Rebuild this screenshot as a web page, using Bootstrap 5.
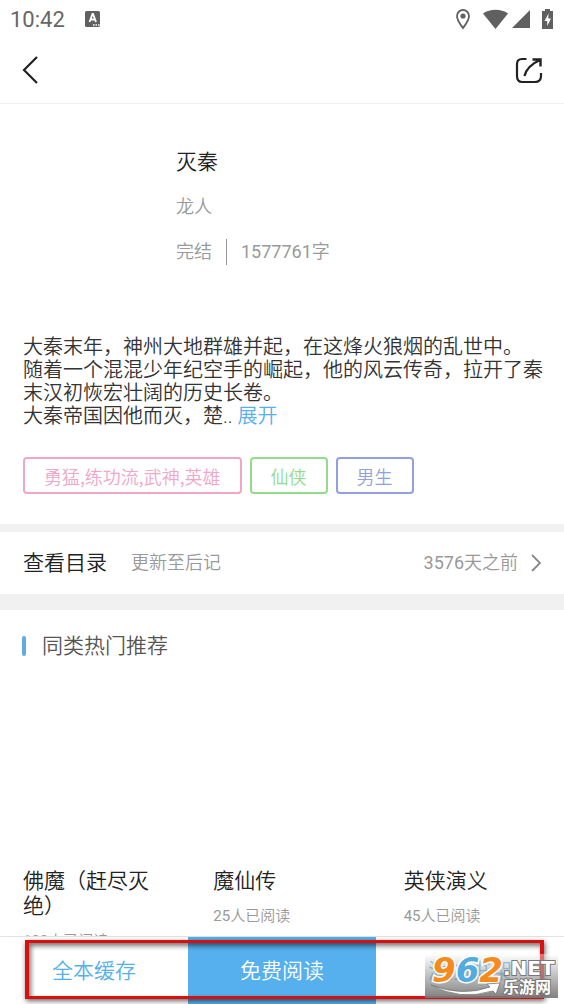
<!DOCTYPE html>
<html lang="zh-CN">
<head>
<meta charset="utf-8">
<meta name="viewport" content="width=device-width, initial-scale=1">
<title>灭秦</title>
<link rel="stylesheet" href="https://cdn.jsdelivr.net/npm/bootstrap@5.3.0/dist/css/bootstrap.min.css">
<style>
body{font-family:Roboto,"Noto Sans CJK SC",sans-serif;font-weight:350;color:#222;background:#fff}
a{text-decoration:none}
.status{height:38px;padding:0 11px 0 10px;color:#666;font-size:22px;font-weight:400}
.topbar{height:66px;padding:0 20px;border-bottom:1px solid #f1f1f1}
.plain{border:0;background:none;padding:0;line-height:1;color:#222}
.gap-before{margin-left:12px}
.t21{font-size:21px;line-height:26px;font-weight:350}
.t18{font-size:18px;line-height:24px;font-weight:350}
.t15{font-size:15px;line-height:20px}
.soft{color:#999}
.info{padding:45px 23px 0 176px;height:232px}
.author,.meta{margin-top:20px}
.rule{width:1px;height:26px;background:#999;margin:0 14px}
.intro{font-size:20px;line-height:23px;padding:0 20px 0 23px;color:#333}
.intro a{color:#55b0ed}
.tags{padding:29px 23px 30px}
.tagbtn{height:37px;border:2px solid currentColor;border-radius:4px;background:#fff;padding:0 19px;font-family:"Noto Sans CJK SC",sans-serif;line-height:30px}
.pink{color:#f0a6c8}.green{color:#92dc8c}.violet{color:#929fe2}
.band{background:#f1f1f1}
.catalog{height:62px;padding:0 20px 0 23px;color:#222}
.section-title{padding:23px 22px 0;gap:16px;color:#555}
.bar{width:4px;height:20px;border-radius:2px;background:#62abe4}
.books{display:grid;grid-template-columns:repeat(3,1fr);column-gap:53px;padding:0 23px}
.cover{height:210px}
.bookname{font-size:21px;line-height:25px;font-weight:350;color:#222;margin-bottom:12px}
.actions{height:68px;border-top:1px solid #e2e2e2;background:#fff}
.actions button{border:0;border-radius:0;background:#fff;color:#55b0ed}
.actions .read{background:#55b0ed;color:#fff}
.frame{position:absolute;inset:3px 20px 5px 25px;border:4px solid #d9100f;border-width:3px 4px;box-shadow:1px 2px 5px #0009,inset 2px 3px 5px #0008;pointer-events:none}
.stamp{position:absolute;right:6px;bottom:6px;width:133px;height:44px;background:linear-gradient(#ffffff66,#777777ee);pointer-events:none}
</style>
</head>
<body>
<div class="d-flex flex-column vh-100 overflow-hidden">
<header class="flex-shrink-0">
<div class="status d-flex align-items-center">
<span>10:42</span>
<svg class="ms-3" width="24" height="18" viewBox="0 0 24 18" role="img" aria-label="输入法"><rect x="4" y="1" width="15" height="16" rx="1.500" fill="#606060"/><path d="m8.500 12 3-8h.500l3 8M9.500 9.500h4.600" fill="none" stroke="#fff" stroke-width="1.800"/><path d="M12 15h1.500m1 0H16m1 0h1.500" stroke="#fff" stroke-width="1.300"/></svg>
<svg class="ms-auto" width="16" height="22" viewBox="0 0 16 22"><path d="M8 20C5 16 2 12.500 2 8a6 6 0 0 1 12 0c0 4.500-3 8-6 12z" fill="none" stroke="#606060" stroke-width="1.800"/><circle cx="8" cy="8" r="2.600" fill="#606060"/></svg>
<svg class="gap-before" width="25" height="20" viewBox="0 0 25 20"><path d="M0 4.500C7-.5 18-.5 25 4.500L12.500 20z" fill="#606060"/></svg>
<svg class="ms-1" width="18" height="18" viewBox="0 0 18 18"><path d="M18 0v18H0z" fill="#606060"/></svg>
<svg class="gap-before" width="11" height="20" viewBox="0 0 11 20"><path d="M3 0h5v2h3v18H0V2h3z" fill="#606060"/><path d="M6.500 4.500 2.500 12h2.700v5L9 9.500H6.300z" fill="#fff"/></svg>
</div>
<nav class="topbar d-flex align-items-center justify-content-between" aria-label="导航">
<button class="plain" aria-label="返回"><svg width="22" height="30" viewBox="0 0 22 30"><path d="M17 1 4 14l13 13" fill="none" stroke="#222" stroke-width="2.200"/></svg></button>
<button class="plain" aria-label="分享"><svg width="30" height="28" viewBox="0 0 30 28"><path d="M12.500 2H8Q3 2 3 7v12q0 6 5 6h13q6 0 6-6v-3" fill="none" stroke="#222" stroke-width="2.200"/><path d="M10.500 19C12 13 17 7 26 3M18.500 2.500H26.500V9.500" fill="none" stroke="#222" stroke-width="2.400"/></svg></button>
</nav>
</header>
<main class="flex-grow-1 overflow-hidden">
<section class="info">
<h1 class="t21 mb-0">灭秦</h1>
<p class="author t18 soft mb-0">龙人</p>
<div class="meta t18 soft d-flex align-items-center"><span>完结</span><span class="rule"></span><span class="fw-normal">1577761<span class="t18">字</span></span></div>
</section>
<p class="intro mb-0">大秦末年，神州大地群雄并起，在这烽火狼烟的乱世中。<br>随着一个混混少年纪空手的崛起，他的风云传奇，拉开了秦末汉初恢宏壮阔的历史长卷。<br>大秦帝国因他而灭，楚.. <a href="#more">展开</a></p>
<div class="tags d-flex gap-2">
<button class="tagbtn t18 pink">勇猛,练功流,武神,英雄</button><button class="tagbtn t18 green">仙侠</button><button class="tagbtn t18 violet">男生</button>
</div>
<div class="band pt-2"></div>
<a class="catalog d-flex align-items-center" href="#catalog"><span class="t21">查看目录</span><span class="t18 soft ms-4">更新至后记</span><span class="soft ms-auto fs-6"><span class="t18 fw-normal">3576</span><span class="t18">天之前</span></span><svg class="ms-2" width="18" height="20" viewBox="0 0 18 20"><path d="m6 2 8 8-8 8" fill="none" stroke="#888" stroke-width="1.800"/></svg></a>
<div class="band pt-3"></div>
<section>
<div class="section-title d-flex align-items-center"><span class="bar"></span><h2 class="t21 mb-0">同类热门推荐</h2></div>
<div class="books">
<article><div class="cover"></div><h3 class="bookname">佛魔（赶尽灭绝）</h3><p class="t15 soft mb-0"><span class="fw-normal">103</span>人已阅读</p></article>
<article><div class="cover"></div><h3 class="bookname">魔仙传</h3><p class="t15 soft mb-0"><span class="fw-normal">25</span>人已阅读</p></article>
<article><div class="cover"></div><h3 class="bookname">英侠演义</h3><p class="t15 soft mb-0"><span class="fw-normal">45</span>人已阅读</p></article>
</div>
</section>
</main>
<footer class="actions position-relative d-flex flex-shrink-0">
<button class="t21 col-4">全本缓存</button><button class="t21 col-4 read">免费阅读</button><button class="t21 col-4">添加书架</button>
<div class="frame"></div>
<svg class="stamp" viewBox="0 0 133 44" role="img" aria-label="962.NET 乐游网">
<text x="7" y="28" font-family="DejaVu Sans,sans-serif" font-weight="700" font-style="italic" font-size="34" stroke="#fff" stroke-width="3" paint-order="stroke" fill="#f58b1d">9<tspan fill="#53acdf">6</tspan>2</text>
<text x="78" y="21" font-family="DejaVu Sans,sans-serif" font-weight="700" font-size="20" fill="#fff" stroke="#777" stroke-width="2" paint-order="stroke">.NET</text>
<text x="78" y="39" font-family="Noto Sans CJK SC,sans-serif" font-weight="700" font-size="16" fill="#fff" stroke="#777" stroke-width="2" paint-order="stroke">乐游网</text>
<path d="M6 31q31 12 59 2l-3-3 13-1-4 11-3-3Q34 47 6 31z" fill="#fff" stroke="#777" stroke-width=".8"/>
</svg>
</footer>
</div>
<script src="https://cdn.jsdelivr.net/npm/bootstrap@5.3.0/dist/js/bootstrap.bundle.min.js"></script>
</body>
</html>
